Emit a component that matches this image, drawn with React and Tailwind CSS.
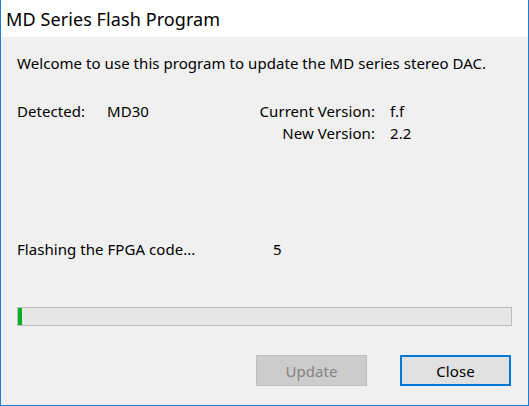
export default function App() {
  const font = { fontFamily: '"Noto Sans", "Open Sans", sans-serif' };
  return (
    <div
      className="w-[529px] h-[406px] flex flex-col bg-[#f0f0f0] border-l border-r border-b border-[#1c7fd6] text-black"
      style={font}
    >
      <div className="h-[37px] bg-white flex items-center pl-[5px] text-[18px] leading-none tracking-[0.09px]">
        MD Series Flash Program
      </div>
      <div className="flex flex-col pl-[16px] pr-[16px] pt-[16px] text-[15px] leading-[20px] tracking-[0.05px]">
        <div>Welcome to use this program to update the MD series stereo DAC.</div>
        <div className="mt-[27px] grid grid-cols-[90px_134px_134px_auto] leading-[22px]">
          <div>Detected:</div>
          <div>MD30</div>
          <div className="text-right">Current Version:</div>
          <div className="pl-[15px]">f.f</div>
          <div></div>
          <div></div>
          <div className="text-right">New Version:</div>
          <div className="pl-[15px]">2.2</div>
        </div>
        <div className="mt-[95px] flex">
          <div className="w-[256px]">Flashing the FPGA code...</div>
          <div>5</div>
        </div>
        <div className="mt-[48px] h-[19px] w-[495px] border border-[#bcbcbc] bg-[#e6e6e6] flex">
          <div className="w-[4px] h-full bg-[#06b025]"></div>
        </div>
        <div className="mt-[29px] flex justify-end gap-[33px] pr-[1px]">
          <button className="w-[111px] h-[31px] bg-[#cccccc] border border-[#bfbfbf] text-[#838383] text-[15px]" style={font}>
            Update
          </button>
          <button className="w-[111px] h-[31px] bg-[#e1e1e1] border-2 border-[#0078d7] text-black text-[15px]" style={font}>
            Close
          </button>
        </div>
      </div>
    </div>
  );
}
